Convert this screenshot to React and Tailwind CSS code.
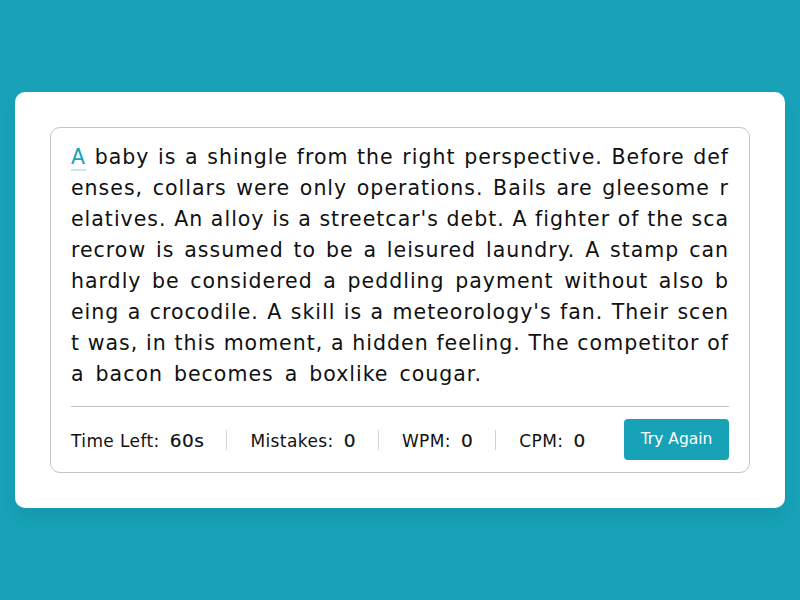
import React from "react";

const lines = [
  "baby is a shingle from the right perspective. Before def",
  "enses, collars were only operations. Bails are gleesome r",
  "elatives. An alloy is a streetcar's debt. A fighter of the sca",
  "recrow is assumed to be a leisured laundry. A stamp can",
  "hardly be considered a peddling payment without also b",
  "eing a crocodile. A skill is a meteorology's fan. Their scen",
  "t was, in this moment, a hidden feeling. The competitor of",
  "a bacon becomes a boxlike cougar.",
];

const stats = [
  { label: "Time Left:", value: "60s" },
  { label: "Mistakes:", value: "0" },
  { label: "WPM:", value: "0" },
  { label: "CPM:", value: "0" },
];

export default function App() {
  return (
    <div className="min-h-screen w-full bg-[#17a2b8] flex items-center justify-center font-['DejaVu_Sans','Noto_Sans',sans-serif]">
      <div className="w-[770px] bg-white rounded-[10px] p-[35px] shadow-[0_10px_15px_rgba(0,0,0,0.06)]">
        <div className="border border-[#c4c4c4] rounded-[10px] px-[20px] pt-[14px] pb-[12px]">
          <div className="text-[20.5px] leading-[31px] tracking-[1px] text-[#111] mb-[16px]">
            {lines.map((l, i) => (
              <div
                key={i}
                className={
                  i < lines.length - 1
                    ? "whitespace-nowrap text-justify [text-align-last:justify]"
                    : "whitespace-nowrap [word-spacing:3.5px]"
                }
              >
                {i === 0 && (
                  <>
                    <span className="text-[#17a2b8] border-b-2 border-[#c3e8ee]">A</span>{" "}
                  </>
                )}
                {l}
              </div>
            ))}
          </div>
          <div className="border-t border-[#c4c4c4] pt-[12px] flex items-center">
            <ul className="flex items-center">
              {stats.map((s, i) => (
                <li
                  key={s.label}
                  className={
                    "flex items-center h-[20px] " +
                    (i === 0 ? "pr-[22px] " : "pl-[23px] pr-[22px] ") +
                    (i < stats.length - 1 ? "border-r border-[#d4d4d4]" : "")
                  }
                >
                  <span className="flex items-baseline pt-[2px]">
                    <span className="text-[17px] tracking-[0.4px] text-[#111]">{s.label}</span>
                    <span className="ml-[10px] text-[18.5px] tracking-[0.5px] text-[#111] [-webkit-text-stroke:0.2px_#111]">
                      {s.value}
                    </span>
                  </span>
                </li>
              ))}
            </ul>
            <button className="ml-auto h-[41px] w-[105px] pt-[1px] bg-[#17a2b8] text-white text-[15.5px] rounded-[4px]">
              Try Again
            </button>
          </div>
        </div>
      </div>
    </div>
  );
}
